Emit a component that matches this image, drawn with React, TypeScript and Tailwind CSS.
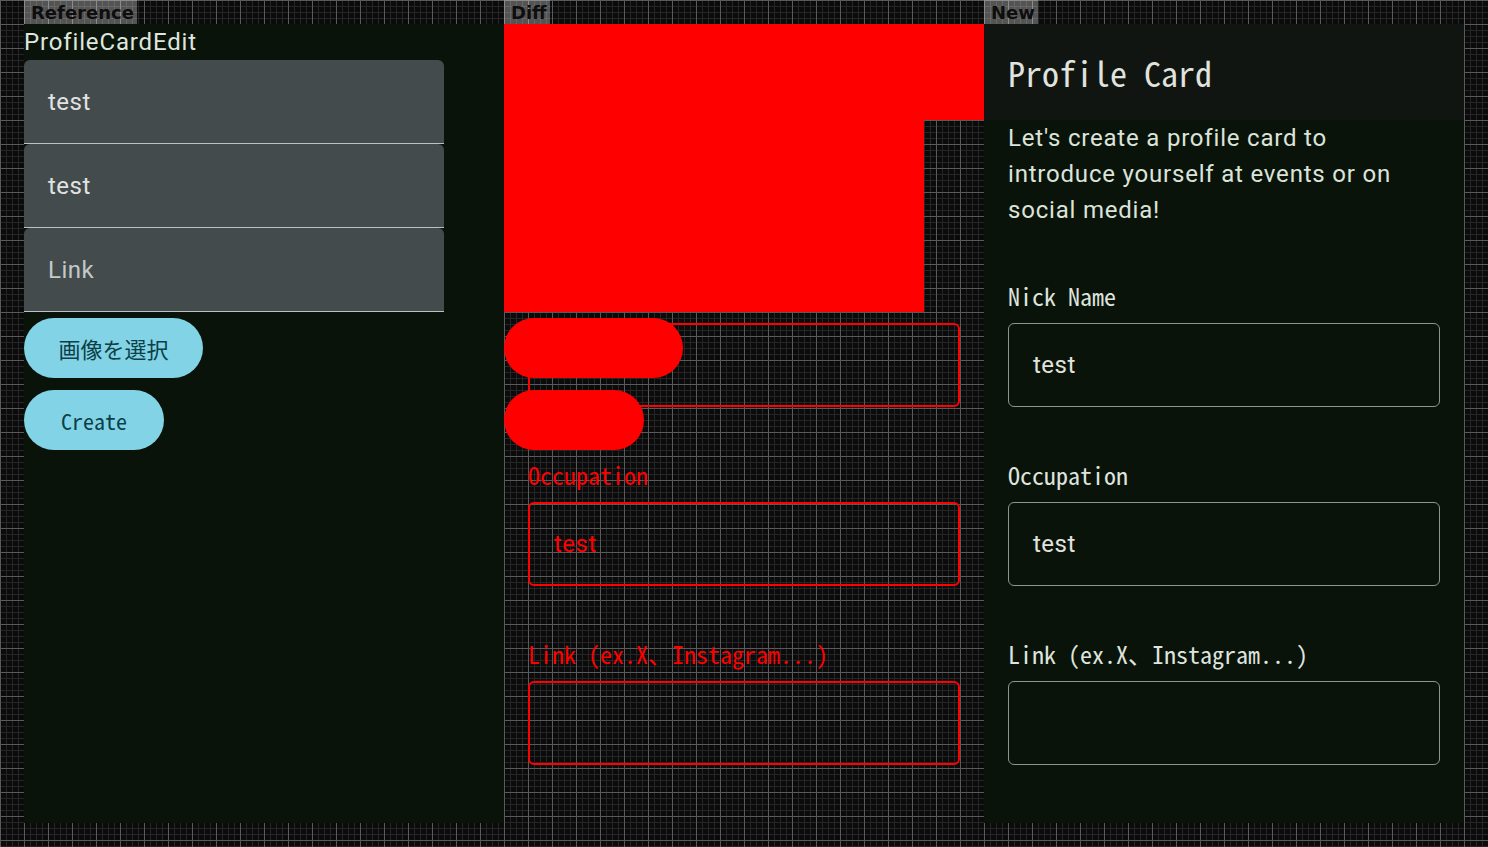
import React from "react";

const MONO = "font-['Noto_Sans_Mono_CJK_JP','Noto_Sans_CJK_JP',monospace]";
const SANS = "font-['Roboto','Noto_Sans_CJK_JP',sans-serif]";

type FieldProps = {
  label: string;
  value?: string;
  diff?: boolean;
};

const Field = ({ label, value, diff }: FieldProps) => (
  <div className="mt-[50px] flex flex-col">
    <div
      className={`${MONO} flex h-9 items-center text-[24px] ${
        diff ? "text-[#ff0000]" : "text-[#dfe4df]"
      }`}
    >
      {label}
    </div>
    <div
      className={`mt-[9px] flex h-[84px] items-center rounded-md px-6 ${SANS} text-[24px] tracking-[0.5px] ${
        diff
          ? "border-2 border-[#ff0000] text-[#ff0000]"
          : "border-[1.5px] border-[#8e9590] text-[#e1e3df]"
      }`}
    >
      {value}
    </div>
  </div>
);

const FilledField = ({ text, placeholder }: { text: string; placeholder?: boolean }) => (
  <div
    className={`flex h-[84px] w-[420px] items-center rounded-t-[6px] border-b-[1.5px] border-[#b9c2c2] bg-[#434b4d] px-6 ${SANS} text-[24px] tracking-[0.5px] ${
      placeholder ? "text-[#c3c9c8]" : "text-[#e1e3e3]"
    }`}
  >
    {text}
  </div>
);

const PillButton = ({ label, width }: { label: string; width: string }) => (
  <div
    className={`flex h-[60px] items-center justify-center rounded-full bg-[#82d3e6] ${width} ${MONO} text-[22px] text-[#0c3f46]`}
  >
    {label}
  </div>
);

const Tag = ({ children }: { children: React.ReactNode }) => (
  <div className="flex h-6 w-fit items-center bg-white/30 pl-[7px] pr-[3px] font-['DejaVu_Sans',sans-serif] text-[18px] font-bold text-[#0e0e0e]">
    {children}
  </div>
);

const ReferencePanel = () => (
  <div className="flex h-[799px] w-[480px] flex-col bg-[#0a1309]">
    <div className={`flex h-9 items-center ${SANS} text-[24px] tracking-[0.85px] text-[#dfe6de]`}>
      ProfileCardEdit
    </div>
    <FilledField text="test" />
    <FilledField text="test" />
    <FilledField text="Link" placeholder />
    <div className="mt-[6px]">
      <PillButton label="画像を選択" width="w-[179px]" />
    </div>
    <div className="mt-3">
      <PillButton label="Create" width="w-[140px]" />
    </div>
  </div>
);

const NewPanel = () => (
  <div className="flex h-[799px] w-[480px] flex-col bg-[#0a1309]">
    <div className={`flex h-24 items-center bg-[#101512] px-6 ${MONO} text-[34px] text-[#e0e4df]`}>
      Profile Card
    </div>
    <div className="px-6">
      <p className={`w-[404px] ${SANS} text-[24px] leading-9 tracking-[0.8px] text-[#dce4da]`}>
        Let's create a profile card to introduce yourself at events or on social media!
      </p>
      <Field label="Nick Name" value="test" />
      <Field label="Occupation" value="test" />
      <Field label="Link (ex.X、Instagram...)" />
    </div>
  </div>
);

const DiffPanel = () => (
  <div className="grid h-[799px] w-[480px]">
    {/* where the new layout differs */}
    <div className="col-start-1 row-start-1 flex flex-col">
      <div className="h-24 bg-[#ff0000]" />
      <div className="h-[108px]" />
      <div className="px-6">
        <Field label="Nick Name" diff />
        <Field label="Occupation" value="test" diff />
        <Field label="Link (ex.X、Instagram...)" diff />
      </div>
    </div>
    {/* where the reference layout differs */}
    <div className="col-start-1 row-start-1 flex flex-col">
      <div className="h-9" />
      <div className="h-[252px] w-[420px] bg-[#ff0000]" />
      <div className="mt-[6px] h-[60px] w-[179px] rounded-full bg-[#ff0000]" />
      <div className="mt-3 h-[60px] w-[140px] rounded-full bg-[#ff0000]" />
    </div>
  </div>
);

export default function App() {
  return (
    <div className="flex h-[847px] w-[1488px] bg-[#0b0b0b] bg-[linear-gradient(to_right,#5a5a5a_1px,transparent_1px),linear-gradient(to_bottom,#5a5a5a_1px,transparent_1px),linear-gradient(to_right,#262626_1px,transparent_1px),linear-gradient(to_bottom,#262626_1px,transparent_1px)] bg-size-[24px_24px,24px_24px,6px_6px,6px_6px] pl-6">
      <div className="flex flex-col">
        <Tag>Reference</Tag>
        <ReferencePanel />
      </div>
      <div className="flex flex-col">
        <Tag>Diff</Tag>
        <DiffPanel />
      </div>
      <div className="flex flex-col">
        <Tag>New</Tag>
        <NewPanel />
      </div>
    </div>
  );
}
